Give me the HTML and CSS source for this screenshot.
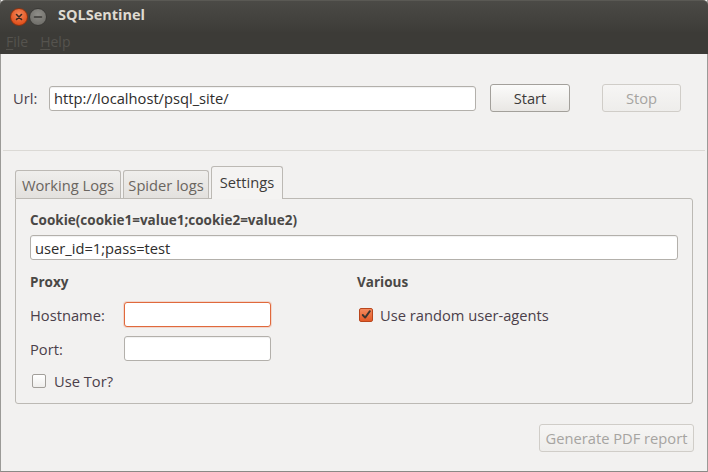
FILE: index.html
```html
<!DOCTYPE html>
<html>
<head>
<meta charset="utf-8">
<link rel="stylesheet" href="styles.css">
</head>
<body>
<div class="window">
  <div class="titlebar">
    <div class="wbtns">
      <span class="wbtn close"><svg width="16" height="16" viewBox="0 0 16 16"><path d="M5.5 5.5 L10.5 10.5 M10.5 5.5 L5.5 10.5" stroke="#3a2a22" stroke-width="1.6" stroke-linecap="round"/></svg></span>
      <span class="wbtn mini"><svg width="16" height="16" viewBox="0 0 16 16"><path d="M4.5 8 L11.5 8" stroke="#3b3a37" stroke-width="1.6" stroke-linecap="round"/></svg></span>
    </div>
    <span class="title">SQLSentinel</span>
  </div>
  <div class="menubar">
    <span class="menu"><u>F</u>ile</span>
    <span class="menu"><u>H</u>elp</span>
  </div>
  <div class="content">
    <div class="urlrow">
      <span class="lbl url-lbl">Url:</span>
      <div class="input url-input">http://localhost/psql_site/</div>
      <div class="btn start">Start</div>
      <div class="btn stop disabled">Stop</div>
    </div>
    <div class="sep"></div>
    <div class="tabbar">
      <div class="tab t1">Working Logs</div>
      <div class="tab t2">Spider logs</div>
      <div class="tab active t3">Settings</div>
    </div>
    <div class="panel">
      <div class="bold cookie-lbl">Cookie(cookie1=value1;cookie2=value2)</div>
      <div class="input cookie-input">user_id=1;pass=test</div>
      <div class="cols">
        <div class="col proxy">
          <div class="bold sect">Proxy</div>
          <div class="frow hostrow">
            <span class="lbl flbl">Hostname:</span>
            <div class="input small focus"></div>
          </div>
          <div class="frow portrow">
            <span class="lbl flbl">Port:</span>
            <div class="input small"></div>
          </div>
          <div class="crow tor">
            <span class="cbox"></span>
            <span class="lbl">Use Tor?</span>
          </div>
        </div>
        <div class="col various">
          <div class="bold sect">Various</div>
          <div class="crow agents">
            <span class="cbox checked"><svg width="14" height="14" viewBox="0 0 14 14"><path d="M3.2 7 L6 10 L11.5 2.5" fill="none" stroke="#3c3530" stroke-width="2.2" stroke-linecap="round" stroke-linejoin="round"/></svg></span>
            <span class="lbl">Use random user-agents</span>
          </div>
        </div>
      </div>
    </div>
    <div class="footer">
      <div class="btn disabled pdf">Generate PDF report</div>
    </div>
  </div>
</div>
</body>
</html>
```

FILE: styles.css
```css
* { box-sizing: border-box; }
html, body { margin: 0; padding: 0; }
body {
  width: 708px;
  height: 472px;
  overflow: hidden;
  font-family: "Open Sans", "DejaVu Sans", sans-serif;
  font-size: 14.7px;
  color: #3c3b3a;
}
.window {
  width: 708px;
  height: 472px;
  display: flex;
  flex-direction: column;
  background: #f2f1f0;
  border-left: 1px solid #9b9a97;
  border-right: 1px solid #9b9a97;
  border-bottom: 1px solid #8a8986;
}
.titlebar {
  height: 32px;
  display: flex;
  align-items: center;
  background: linear-gradient(#4b4a46, #3d3c38);
  border-top: 1px solid #5a5954;
  border-radius: 5px 5px 0 0;
  margin: 0 -1px;
  padding-left: 10px;
}
.wbtns { display: flex; gap: 1px; }
.wbtn {
  width: 18px;
  height: 18px;
  border-radius: 50%;
  display: flex;
  align-items: center;
  justify-content: center;
}
.wbtn.close {
  background: radial-gradient(circle at 50% 35%, #f58a5c, #e2531f 70%, #c8430f);
  border: 1px solid #8a3413;
}
.wbtn.mini {
  background: radial-gradient(circle at 50% 35%, #8f8e89, #73726d 70%, #62615d);
  border: 1px solid #3a3936;
}
.title {
  margin-left: 11px;
  font-weight: bold;
  font-size: 14.5px;
  color: #dfdbd2;
  margin-top: -4px;
}
.menubar {
  height: 22px;
  background: #3c3b37;
  display: flex;
  align-items: center;
  gap: 12px;
  padding-left: 6px;
  margin: 0 -1px;
}
.menu {
  color: #55534e;
  font-size: 14px;
  margin-top: -3px;
}
.menu u { text-decoration-thickness: 1px; text-underline-offset: 2px; }
.content {
  flex: 1;
  display: flex;
  flex-direction: column;
}
.urlrow {
  margin-top: 30px;
  height: 28px;
  display: flex;
  align-items: center;
  padding-left: 12px;
}
.lbl { color: #4b3f4a; }
.url-lbl { width: 36px; }
.input {
  background: #fff;
  border: 1px solid #b3b0ab;
  border-radius: 3px;
  height: 25px;
  padding: 0 4px;
  display: flex;
  align-items: center;
  color: #2e2d2c;
  box-shadow: inset 0 1px 1px rgba(0,0,0,0.06);
}
.url-input { width: 427px; }
.btn {
  height: 28px;
  border: 1px solid #a3a09b;
  border-radius: 3px;
  background: linear-gradient(#fbfbfa, #e9e7e4);
  display: flex;
  align-items: center;
  justify-content: center;
  color: #3c3b3a;
}
.btn.disabled {
  border-color: #d0cdc8;
  background: linear-gradient(#f6f5f4, #eeedeb);
  color: #a6a4a1;
}
.start { width: 80px; margin-left: 14px; }
.stop { width: 79px; margin-left: 32px; }
.sep {
  margin: 38px 2px 0 2px;
  height: 1px;
  background: #dbd9d5;
}
.tabbar {
  margin-top: 15px;
  height: 32px;
  display: flex;
  align-items: flex-end;
  padding-left: 14px;
  gap: 2px;
  position: relative;
  z-index: 1;
}
.tab {
  height: 28px;
  border: 1px solid #bcb9b4;
  border-bottom: none;
  border-radius: 3px 3px 0 0;
  background: linear-gradient(#efeeec, #e3e1de);
  color: #6a6560;
  display: flex;
  align-items: center;
  justify-content: center;
}
.t1 { width: 106px; }
.t2 { width: 86px; }
.tab.active {
  height: 33px;
  width: 72px;
  margin-bottom: -1px;
  background: #f4f3f2;
  color: #3c3b3a;
  padding-bottom: 3px;
}
.panel {
  margin-left: 14px;
  width: 678px;
  height: 206px;
  border: 1px solid #bcb9b4;
  border-radius: 0 3px 3px 3px;
  background: #f2f1f0;
  padding: 12px 14px 0 14px;
  display: flex;
  flex-direction: column;
}
.bold { font-weight: bold; color: #4a4846; font-size: 13.5px; }
.cookie-lbl { height: 18px; line-height: 18px; }
.cookie-input { margin-top: 6px; width: 648px; }
.cols { display: flex; margin-top: 13px; }
.col { display: flex; flex-direction: column; }
.proxy { width: 327px; }
.sect { height: 18px; line-height: 18px; }
.frow { display: flex; align-items: center; height: 25px; }
.hostrow { margin-top: 11px; }
.portrow { margin-top: 9px; }
.flbl { width: 94px; }
.input.small { width: 147px; }
.input.focus { border-color: #e0693c; box-shadow: 0 0 0 1px rgba(240,140,100,0.25); }
.crow { display: flex; align-items: center; gap: 8px; }
.tor { margin-top: 10px; padding-left: 2px; }
.agents { margin-top: 14px; padding-left: 2px; gap: 7px; }
.cbox {
  width: 14px;
  height: 14px;
  border: 1px solid #a29f9a;
  border-radius: 2px;
  background: linear-gradient(#ffffff, #efeeec);
  display: flex;
  align-items: center;
  justify-content: center;
}
.cbox.checked {
  border-color: #b9461c;
  background: linear-gradient(#f48a5e, #e35a27);
}
.footer {
  display: flex;
  justify-content: flex-end;
  padding-right: 13px;
  margin-top: 20px;
}
.pdf { width: 155px; height: 28px; }
```
